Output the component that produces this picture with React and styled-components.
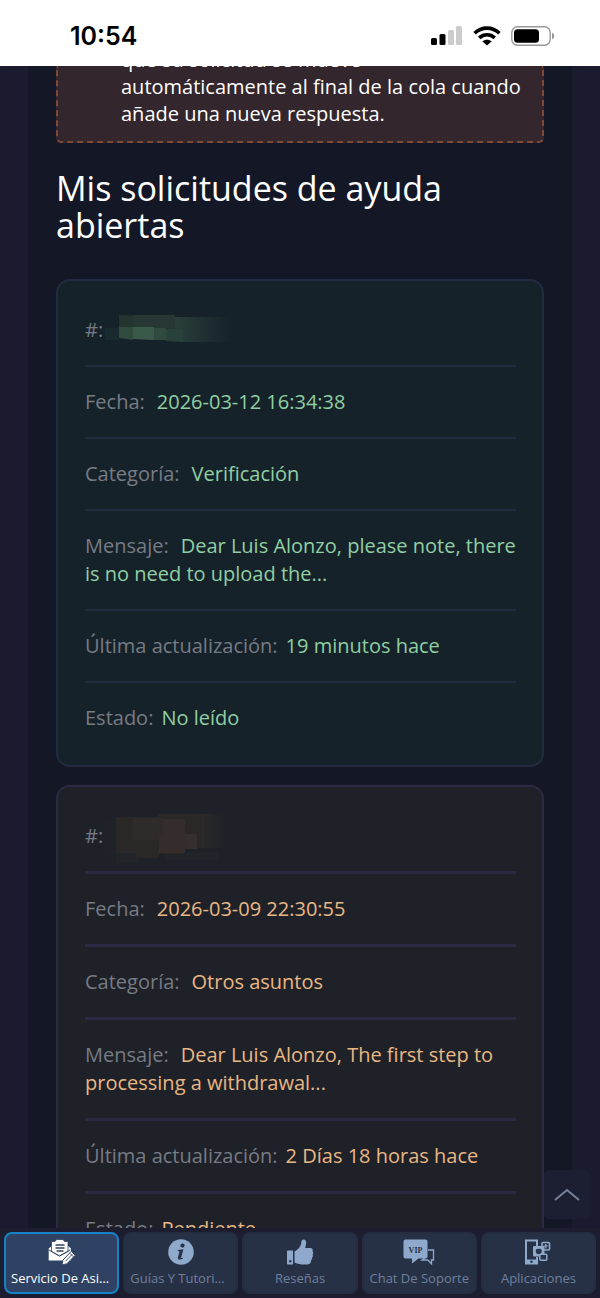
import React from "react";
import styled, { createGlobalStyle } from "styled-components";

const tickets = [
	{
		tone: "unread",
		date: "2026-03-12 16:34:38",
		category: "Verificación",
		message: "Dear Luis Alonzo, please note, there is no need to upload the...",
		updated: "19 minutos hace",
		status: "No leído",
	},
	{
		tone: "pending",
		date: "2026-03-09 22:30:55",
		category: "Otros asuntos",
		message: "Dear Luis Alonzo, The first step to processing a withdrawal...",
		updated: "2 Días 18 horas hace",
		status: "Pendiente",
	},
];

const tones = {
	unread: { background: "#16222a", text: "#90cfa2", line: "#232b42", rule: 2 },
	pending: { background: "#1e2128", text: "#e9b784", line: "#292a44", rule: 3 },
};

const SignalIcon = () => (
	<svg width="32" height="20" viewBox="0 0 32 20" aria-hidden="true">
		<rect x="0" y="12" width="6" height="7" rx="1.5" fill="#000" />
		<rect x="8.5" y="8" width="6" height="11" rx="1.5" fill="#000" />
		<rect x="17" y="4" width="6" height="15" rx="1.5" fill="#ccc" />
		<rect x="25" y="0" width="6" height="19" rx="1.5" fill="#ccc" />
	</svg>
);

const WifiIcon = () => (
	<svg width="28" height="20" viewBox="0 0 28 20" aria-hidden="true">
		<g fill="none" stroke="#000" strokeWidth="3.6">
			<path d="M1.6 7.2C8.6 .4 19.4 .4 26.4 7.2" />
			<path d="M6.2 11.8c4.6-4 11-4 15.6 0" />
		</g>
		<path d="M9.2 15.2c2.8-2.1 6.8-2.1 9.6 0L14 19.6z" fill="#000" />
	</svg>
);

const BatteryIcon = () => (
	<svg width="44" height="20" viewBox="0 0 44 20" aria-hidden="true">
		<rect x=".8" y=".8" width="38.4" height="18.4" rx="5.6" fill="none" stroke="#999" strokeWidth="1.4" />
		<rect x="3" y="3.2" width="25" height="13.6" rx="3.6" fill="#000" />
		<path d="M41 6.8c3 .9 3 5.5 0 6.4z" fill="#999" />
	</svg>
);

const SupportIcon = () => (
	<svg width="28" height="26" viewBox="0 0 28 26" aria-hidden="true">
		<path d="M.7 9.5 4.500 6.500h15l3.500 3V21.500H.7z" fill="#fff" />
		<path d="M3.500 2.500h3.500L8.500.5h6.500l1.500 2h3.500v10l-8.500 4.500-8-4.500z" fill="#fff" stroke="#304263" strokeWidth=".8" />
		<path d="M7.500 6h9M7.500 9h9M8.500 12h7" stroke="#304263" strokeWidth="1.3" />
		<path d="M.7 10.800l10.800 6.200 11-6.200" fill="none" stroke="#304263" strokeWidth="1" />
		<path d="m14.800 21.200 8.500-8.900 4 3.900-8.600 8.700-4.700 1z" fill="#fff" stroke="#304263" />
		<path d="m17.500 22.300 6.700-7M21.800 14.200l3.600 3.600" stroke="#304263" strokeWidth=".9" />
	</svg>
);

const InfoIcon = () => (
	<svg width="28" height="26" viewBox="0 0 28 26" aria-hidden="true">
		<circle cx="14" cy="13" r="12.8" fill="#8ea9cc" />
		<circle cx="15.5" cy="6.6" r="2.1" fill="#293248" />
		<path d="m10.8 11 5.6-.8-2.2 8.2c-.2.8.4.8 2 .1l-.3 1c-2.6 1.5-5.6 1.600-5-1l1.600-6.300-1.900-.3z" fill="#293248" />
	</svg>
);

const ThumbIcon = () => (
	<svg width="28" height="26" viewBox="0 0 28 26" fill="#8ea9cc" aria-hidden="true">
		<path fillRule="evenodd" d="M1.800 11.500h5.200v14H1.800a1 1 0 0 1-.8-1v-12a1 1 0 0 1 .8-1zM4.300 21a1.200 1.200 0 1 0 0 2.400 1.200 1.200 0 0 0 0-2.400z" />
		<path d="M8.500 12.500c4-2.400 6.300-5 6.700-8.500.2-2 .8-3.500 2.300-3.500 2 0 3 1.800 2.600 4.200L19.300 9h5c2 0 2.900 1.700 2.300 3.200.8.900.8 2.300 0 3.200.6 1 .3 2.500-.6 3.200.4 1-.1 2.300-1 2.900.2 2.600-1 3.700-3.500 3.900-5.500.5-9-.3-13-2z" />
	</svg>
);

const VipIcon = () => (
	<svg width="32" height="26" viewBox="0 0 32 26" aria-hidden="true">
		<path d="M25 11h5.500v10h-2v3.800L24.700 21H19l4-3" fill="none" stroke="#8ea9cc" strokeWidth="1.3" />
		<path d="M2.500.5h20a2 2 0 0 1 2 2v15a2 2 0 0 1-2 2h-7L9 24.500v-5H2.500a2 2 0 0 1-2-2v-15a2 2 0 0 1 2-2z" fill="#8ea9cc" />
		<text x="12.5" y="13.500" textAnchor="middle" fontFamily="Liberation Serif, serif" fontWeight="700" fontSize="8" fill="#293248">VIP</text>
	</svg>
);

const AppsIcon = () => (
	<svg width="28" height="26" viewBox="0 0 28 26" aria-hidden="true">
		<path d="M13 7V1.500H2v23h11V18" fill="none" stroke="#8ea9cc" strokeWidth="2" />
		<path d="M2 20.500h11v4H2z" fill="#8ea9cc" />
		<circle cx="7.500" cy="22.700" r="1.200" fill="#293248" />
		<rect x="18" y="3.500" width="7.500" height="7.500" rx="1" fill="none" stroke="#8ea9cc" strokeWidth="1.600" />
		<path d="M19.500 7h4.500M21.800 5v4.500" stroke="#8ea9cc" strokeWidth="1.200" />
		<rect x="9" y="7" width="11.500" height="10.500" rx="1" fill="#8ea9cc" />
		<path d="M14.800 10c1.500-.6 3 .2 3 2.200 0 1.800-1.200 3-3 3s-3-1.200-3-3c0-2 1.500-2.800 3-2.200z" fill="#293248" />
		<rect x="15.800" y="15.300" width="7" height="6" rx="1" fill="#293248" stroke="#8ea9cc" strokeWidth="1.500" />
	</svg>
);

const navItems = [
	{ label: "Servicio De Asistencia", icon: SupportIcon, active: true },
	{ label: "Guías Y Tutoriales", icon: InfoIcon },
	{ label: "Reseñas", icon: ThumbIcon },
	{ label: "Chat De Soporte", icon: VipIcon },
	{ label: "Aplicaciones", icon: AppsIcon },
];

const GreenBlur = () => (
	<svg width="136" height="32" viewBox="0 0 136 32" aria-hidden="true">
		<defs>
			<linearGradient id="greenFade">
				<stop offset="0" stopColor="#2b3e3b" />
				<stop offset="1" stopColor="#16222a" />
			</linearGradient>
		</defs>
		<path d="M0 14h14v12H0z" fill="#192a2e" />
		<path d="M14 1 70 3v12H14z" fill="#24352f" />
		<path d="M28 1h42v13H28z" fill="#263734" />
		<path d="M14 13h14v13l-14-2z" fill="#304b3d" />
		<path d="M28 13h21v13l-21-1z" fill="#3b5948" />
		<path d="M49 14h12v12H49z" fill="#304a40" />
		<path d="M61 15h17v13l-17-1z" fill="#29413b" />
		<path d="M70 3h56v25H78V15h-8z" fill="url(#greenFade)" />
	</svg>
);

const BrownBlur = () => (
	<svg width="136" height="56" viewBox="0 -6 136 56" aria-hidden="true">
		<defs>
			<linearGradient id="brownFade">
				<stop offset="0" stopColor="#2c2a2a" />
				<stop offset="1" stopColor="#1e2128" />
			</linearGradient>
		</defs>
		<path d="M0 6h11v34H0z" fill="#202229" />
		<path d="M11 38h22v11H11zM60 38h54v8H60z" fill="#212428" />
		<path d="M96 0h26v34H96z" fill="url(#brownFade)" />
		<path d="M11 3h42V0h43v34H79v6H54v4H31v-5H11z" fill="#2a2827" />
		<path d="M28 4h30v22H28z" fill="#2f2b2a" />
		<path d="M58 5h22v34H54V21h4z" fill="#342d2c" />
		<path d="M80 20h12v15H80z" fill="#352f2e" />
	</svg>
);

const App = () => {
	return (
		<>
			<GlobalStyle />
			<Screen>
				<StatusBar>
					<Clock>10:54</Clock>
					<StatusIcons>
						<SignalIcon />
						<WifiIcon />
						<BatteryIcon />
					</StatusIcons>
				</StatusBar>
				<Content>
					<Notice>
						que su solicitud se mueve automáticamente al final de la cola cuando añade una nueva respuesta.
					</Notice>
					<Title>Mis solicitudes de ayuda abiertas</Title>
					<TicketList>
						{tickets.map((ticket) => (
							<Ticket key={ticket.date} $tone={tones[ticket.tone]}>
								<Row>
									<Label>#:</Label>
									<Hidden>{ticket.tone === "unread" ? <GreenBlur /> : <BrownBlur />}</Hidden>
								</Row>
								<Row>
									<Label $wide>Fecha:</Label>
									{ticket.date}
								</Row>
								<Row>
									<Label $wide>Categoría:</Label>
									{ticket.category}
								</Row>
								<Row>
									<Label $wide>Mensaje:</Label>
									{ticket.message}
								</Row>
								<Row>
									<Label>Última actualización:</Label>
									{ticket.updated}
								</Row>
								<Row>
									<Label>Estado:</Label>
									{ticket.status}
								</Row>
							</Ticket>
						))}
					</TicketList>
				</Content>
				<TopButton type="button" aria-label="Subir">
					<svg width="26" height="14" viewBox="0 0 26 14" aria-hidden="true">
						<path d="M1 12 13 2l12 10" fill="none" stroke="#77809a" strokeWidth="2" />
					</svg>
				</TopButton>
				<Nav>
					{navItems.map(({ label, icon: Icon, active }) => (
						<NavButton key={label} type="button" $active={active}>
							<Icon />
							<NavLabel>{label}</NavLabel>
						</NavButton>
					))}
				</Nav>
			</Screen>
		</>
	);
};

const GlobalStyle = createGlobalStyle`
	* {
		box-sizing: border-box;
	}

	body {
		margin: 0;
		background-color: #1a1b2f;
		font-family: "Open Sans", "Noto Sans", sans-serif;
	}
`;

const Screen = styled.div`
	position: relative;
	display: flex;
	flex-direction: column;
	height: 100vh;
	overflow: hidden;
`;

const StatusBar = styled.header`
	display: flex;
	flex-shrink: 0;
	align-items: center;
	justify-content: space-between;
	height: 66px;
	padding: 6px 45px 0 70px;
	background-color: #fff;
	color: #000;
`;

const Clock = styled.span`
	font-family: Inter, sans-serif;
	font-size: 25px;
	font-weight: 600;
`;

const StatusIcons = styled.div`
	display: flex;
	align-items: center;
	gap: 10px;
`;

const Content = styled.main`
	flex: 1;
	min-height: 0;
	margin: 0 28px;
	padding: 0 28px;
	overflow: hidden;
	background-color: #141726;
`;

const Notice = styled.div`
	display: flex;
	flex-direction: column;
	justify-content: flex-end;
	height: 77px;
	padding: 0 18px 14px 63px;
	overflow: hidden;
	border: 2px dashed #804936;
	border-top: none;
	border-radius: 0 0 5px 5px;
	background-color: #33262c;
	color: #fff;
	font-size: 20px;
	line-height: 27px;
`;

const Title = styled.h1`
	margin: 27px 0 35px;
	color: #fff;
	font-size: 34px;
	font-weight: 400;
	line-height: 37px;
`;

const TicketList = styled.div`
	display: flex;
	flex-direction: column;
	gap: 18px;
`;

const Row = styled.div`
	position: relative;
	padding: 21px 0;
`;

const Ticket = styled.article`
	padding: 14px 26px 12px 27px;
	border: 2px solid ${({ $tone }) => $tone.line};
	border-radius: 14px;
	background-color: ${({ $tone }) => $tone.background};
	color: ${({ $tone }) => $tone.text};
	font-size: 20px;
	line-height: 28px;

	${Row}:not(:last-child) {
		border-bottom: ${({ $tone }) => `${$tone.rule}px solid ${$tone.line}`};
	}
`;

const Label = styled.span`
	margin-right: ${({ $wide }) => ($wide ? "12px" : "8px")};
	color: #777b84;
`;

const Hidden = styled.span`
	position: absolute;
	top: 50%;
	left: 20px;
	display: flex;
	transform: translateY(-50%);
`;

const TopButton = styled.button`
	position: absolute;
	right: 10px;
	bottom: 79px;
	display: flex;
	align-items: center;
	justify-content: center;
	width: 46px;
	height: 49px;
	padding: 0;
	border: none;
	border-radius: 5px;
	background-color: #1c1f31;
	cursor: pointer;
`;

const Nav = styled.nav`
	display: flex;
	flex-shrink: 0;
	gap: 4px;
	height: 70px;
	padding: 4px;
	background-color: #1c1e30;
`;

const NavButton = styled.button`
	display: flex;
	flex: 1;
	flex-direction: column;
	align-items: center;
	gap: 4px;
	min-width: 0;
	height: 62px;
	padding: 5px;
	border: 2px solid ${({ $active }) => ($active ? "#1683c9" : "#252d42")};
	border-radius: 8px;
	background-color: ${({ $active }) => ($active ? "#304263" : "#273146")};
	color: ${({ $active }) => ($active ? "#fff" : "#6f7f9b")};
	font-family: inherit;
	font-size: 13px;
	line-height: 18px;
	cursor: pointer;
`;

const NavLabel = styled.span`
	max-width: 100%;
	overflow: hidden;
	text-overflow: ellipsis;
	white-space: nowrap;
`;

export default App;
